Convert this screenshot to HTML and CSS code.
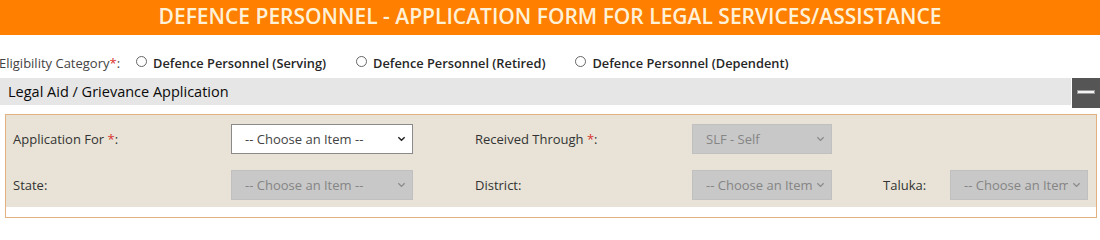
FILE: index.html
```html
<!DOCTYPE html>
<html>
<head>
<meta charset="utf-8">
<link rel="stylesheet" href="styles.css">
</head>
<body>
<div class="page-title">DEFENCE PERSONNEL - APPLICATION FORM FOR LEGAL SERVICES/ASSISTANCE</div>
<div class="eligibility">
  <span class="elig-label">Eligibility Category<span class="req">*</span>:</span>
  <label class="radio"><span class="circle"></span><span class="radio-text">Defence Personnel (Serving)</span></label>
  <label class="radio"><span class="circle"></span><span class="radio-text">Defence Personnel (Retired)</span></label>
  <label class="radio"><span class="circle"></span><span class="radio-text">Defence Personnel (Dependent)</span></label>
</div>
<div class="section-bar">
  <div class="section-title">Legal Aid / Grievance Application</div>
  <div class="collapse-btn"><span class="minus"></span></div>
</div>
<div class="panel">
  <div class="panel-inner">
    <div class="form-row">
      <div class="lbl lbl-1">Application For <span class="req">*</span>:</div>
      <div class="sel sel-1 enabled"><span class="sel-text">-- Choose an Item --</span><svg class="chev" viewBox="0 0 10 6"><path d="M1.5 1 L5 4.5 L8.5 1" fill="none" stroke="#222" stroke-width="1.6"/></svg></div>
      <div class="lbl lbl-2">Received Through <span class="req">*</span>:</div>
      <div class="sel sel-2 disabled"><span class="sel-text">SLF - Self</span><svg class="chev" viewBox="0 0 10 6"><path d="M1.5 1 L5 4.5 L8.5 1" fill="none" stroke="#8a8a8a" stroke-width="1.4"/></svg></div>
    </div>
    <div class="form-row">
      <div class="lbl lbl-1">State:</div>
      <div class="sel sel-1 disabled"><span class="sel-text">-- Choose an Item --</span><svg class="chev" viewBox="0 0 10 6"><path d="M1.5 1 L5 4.5 L8.5 1" fill="none" stroke="#8a8a8a" stroke-width="1.4"/></svg></div>
      <div class="lbl lbl-2">District:</div>
      <div class="sel sel-2 disabled"><span class="sel-text">-- Choose an Item --</span><svg class="chev" viewBox="0 0 10 6"><path d="M1.5 1 L5 4.5 L8.5 1" fill="none" stroke="#8a8a8a" stroke-width="1.4"/></svg></div>
      <div class="lbl lbl-3">Taluka:</div>
      <div class="sel sel-3 disabled"><span class="sel-text">-- Choose an Item --</span><svg class="chev" viewBox="0 0 10 6"><path d="M1.5 1 L5 4.5 L8.5 1" fill="none" stroke="#8a8a8a" stroke-width="1.4"/></svg></div>
    </div>
  </div>
</div>
</body>
</html>
```
FILE: styles.css
```css
html, body {
  margin: 0;
  padding: 0;
  background: #ffffff;
  font-family: "Open Sans", "Liberation Sans", sans-serif;
  color: #333;
  width: 1100px;
  height: 219px;
  overflow: hidden;
}
.page-title {
  height: 35px;
  background: #ff7f00;
  color: #fff1d8;
  font-size: 21px;
  font-weight: 600;
  text-align: center;
  line-height: 33px;
}
.eligibility {
  display: flex;
  align-items: center;
  height: 43px;
  box-sizing: border-box;
  padding-top: 13px;
  font-size: 13px;
}
.elig-label {
  margin-left: -1px;
  color: #444;
  font-size: 13px;
}
.req { color: #d9322e; }
.radio {
  display: flex;
  align-items: center;
  margin-left: 16px;
}
.radio + .radio { margin-left: 30px; }
.circle {
  width: 11px;
  height: 11px;
  border: 1px solid #666;
  border-radius: 50%;
  box-sizing: border-box;
  margin-right: 6px;
  margin-top: -4px;
  background: #fff;
}
.radio-text {
  font-weight: 600;
  color: #262626;
  font-size: 12.8px;
}
.section-bar {
  display: flex;
  height: 30px;
}
.section-title {
  flex: 1;
  background: #e6e6e6;
  height: 27px;
  line-height: 27px;
  padding-left: 8px;
  font-size: 14.5px;
  color: #0a0a0a;
}
.collapse-btn {
  width: 28px;
  height: 30px;
  background: #555555;
  margin-left: 1px;
  display: flex;
  align-items: center;
  justify-content: center;
}
.minus {
  width: 16px;
  height: 2px;
  background: #f4f4f4;
  border: 1px solid #999;
  margin-top: -2px;
}
.panel {
  margin: 6px 3px 0 5px;
  border: 1px solid #e3b17e;
  background: #fff;
  height: 104px;
  box-sizing: border-box;
  padding-bottom: 10px;
}
.panel-inner {
  background: #e8e3d6;
  height: 100%;
  padding-top: 8px;
  box-sizing: border-box;
}
.form-row {
  display: flex;
  align-items: center;
  height: 31px;
  margin-bottom: 15px;
}
.lbl {
  font-size: 13px;
  color: #333;
  flex: none;
}
.lbl-1 { width: 218px; padding-left: 7px; }
.lbl-2 { width: 217px; padding-left: 62px; }
.lbl-3 { width: 67px; padding-left: 51px; }
.sel {
  display: flex;
  align-items: center;
  justify-content: space-between;
  height: 30px;
  box-sizing: border-box;
  padding: 0 6px 0 13px;
  font-size: 13px;
  flex: none;
  overflow: hidden;
}
.sel-1 { width: 182px; }
.sel-2 { width: 140px; }
.sel-3 { width: 138px; }
.sel.enabled {
  background: #fff;
  border: 1px solid #8a8a8a;
  color: #444;
}
.sel.disabled {
  background: #c8c8c8;
  border: 1px solid #c0c0c0;
  color: #858585;
}
.sel-text {
  white-space: nowrap;
  overflow: hidden;
  flex: 1;
}
.chev {
  width: 9px;
  height: 6px;
  flex: none;
  margin-left: 4px;
}
```
